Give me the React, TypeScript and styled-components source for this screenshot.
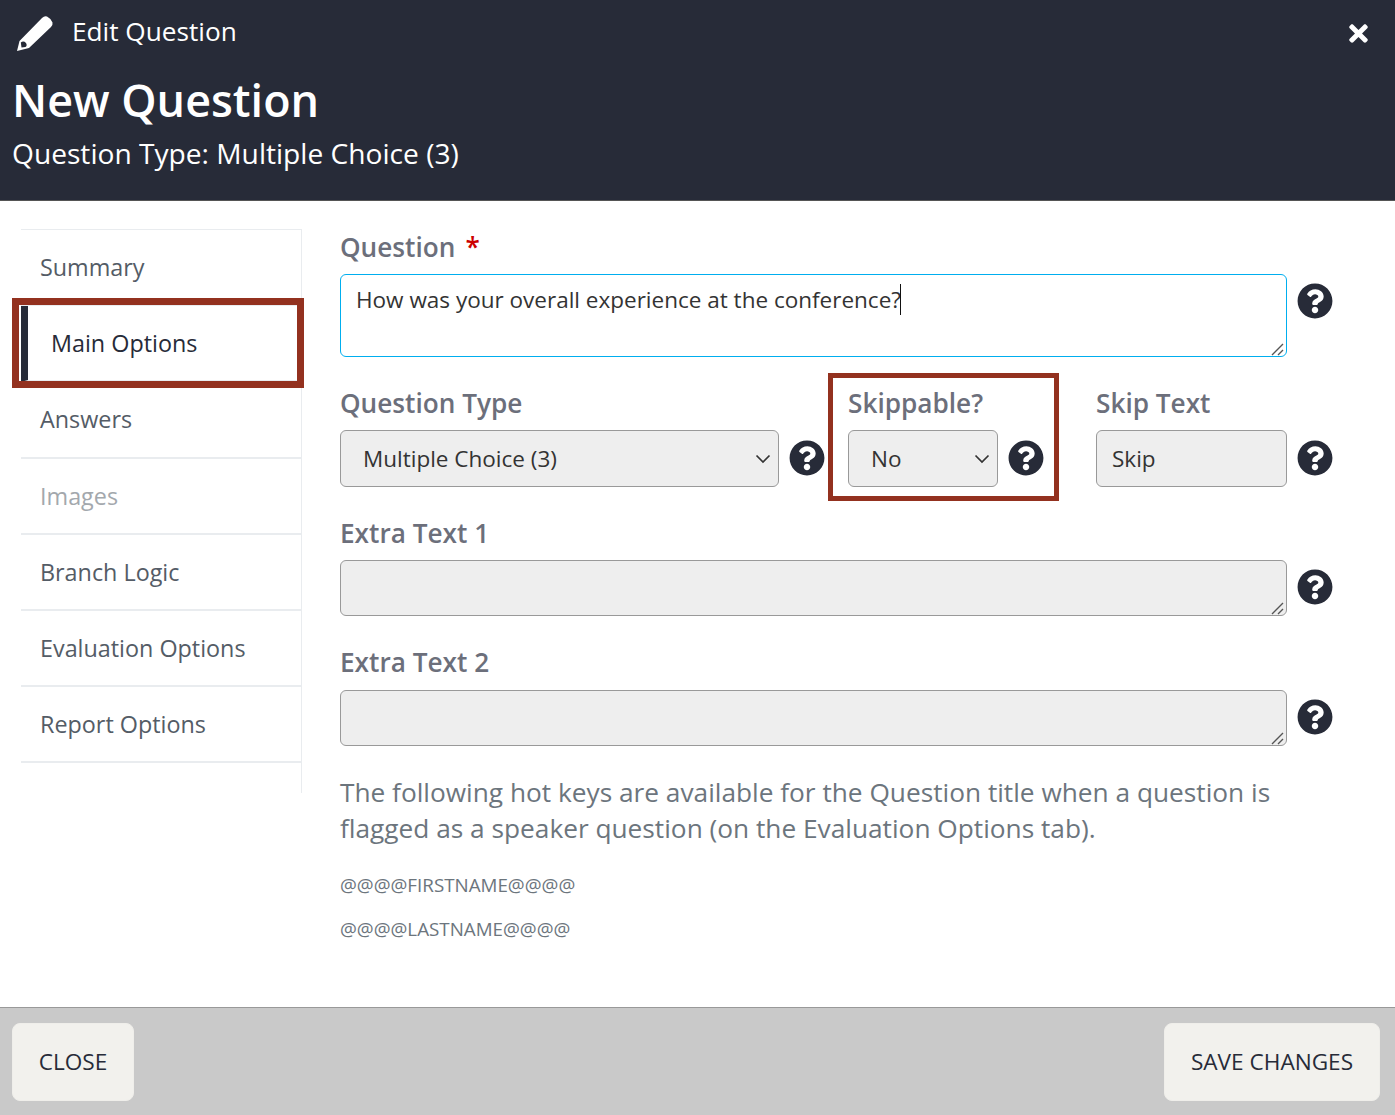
import React from "react";
import styled, { createGlobalStyle } from "styled-components";
import { FaQuestionCircle, FaTimes } from "react-icons/fa";

const GlobalStyle = createGlobalStyle`
    html, body {
        margin: 0;
        padding: 0;
        background: #fff;
    }
    body {
        font-family: "Open Sans", "Noto Sans", sans-serif;
    }
    * {
        box-sizing: border-box;
    }
`;

const Page = styled.div`
    position: relative;
    width: 1395px;
    height: 1115px;
    display: flex;
    flex-direction: column;
    overflow: hidden;
`;

const Header = styled.header`
    height: 201px;
    padding: 15px 14px 0 12px;
    background: #272b38;
    border-bottom: 1px solid #555;
    color: #fff;
`;

const TopRow = styled.div`
    display: flex;
    align-items: center;
    height: 37px;
    padding-left: 4px;
    font-size: 26.2px;
    svg.pencil {
        width: 37px;
        height: 37px;
        margin-right: 19px;
    }
`;

const TopLabel = styled.span`
    margin-bottom: 6px;
`;

const CloseIcon = styled(FaTimes)`
    margin-left: auto;
    margin-right: 9px;
    font-size: 27px;
`;

const Title = styled.h1`
    margin: 18px 0 0 0;
    font-size: 44.9px;
    line-height: 60px;
    font-weight: 600;
`;

const Subtitle = styled.div`
    margin-top: 4px;
    font-size: 28.15px;
    line-height: 38px;
`;

const Body = styled.div`
    flex: 1;
    display: flex;
    padding: 28px 0 0 21px;
`;

const Nav = styled.nav`
    width: 281px;
    height: 564px;
    border-right: 1px solid #e9ecef;
    border-top: 1px solid #e9ecef;
`;

const NavItem = styled.div<{ $active?: boolean; $disabled?: boolean }>`
    display: flex;
    align-items: center;
    height: 76.2px;
    padding-left: ${(p) => (p.$active ? "23px" : "19px")};
    border-bottom: 2px solid #e9ecef;
    border-left: ${(p) => (p.$active ? "7px solid #272b38" : "0")};
    color: ${(p) => (p.$active ? "#272b38" : p.$disabled ? "#a3a8ad" : "#545c66")};
    font-size: 23.35px;
`;

const Form = styled.main`
    width: 1040px;
    margin-left: 38px;
`;

const Label = styled.label`
    display: block;
    height: 36px;
    color: #6c6f7b;
    font-size: 26.2px;
    line-height: 37px;
    font-weight: 600;
    white-space: nowrap;
`;

const Required = styled.span`
    margin-left: 10px;
    color: #c00;
`;

const Line = styled.div<{ $gap?: number }>`
    display: flex;
    align-items: center;
    gap: 10px;
    margin-top: ${(p) => p.$gap ?? 9}px;
`;

const FieldBox = styled.div`
    position: relative;
    display: flex;
    width: 947px;
`;

const TextArea = styled.textarea<{ $focused?: boolean; $h: number }>`
    width: 100%;
    height: ${(p) => p.$h}px;
    padding: 8px 15px;
    border: 1px solid ${(p) => (p.$focused ? "#00aeef" : "#999")};
    border-radius: 6px;
    outline: none;
    background: ${(p) => (p.$focused ? "#fff" : "#eee")};
    color: #333;
    font-family: inherit;
    font-size: 22.5px;
    line-height: 33px;
    resize: none;
`;

const Caret = styled.span`
    position: absolute;
    left: 560px;
    top: 10px;
    width: 1px;
    height: 31px;
    background: #111;
`;

const Grip = styled.svg`
    position: absolute;
    right: 2px;
    bottom: 1px;
    width: 14px;
    height: 14px;
    stroke: #555;
    stroke-width: 1.4;
`;

const HelpIcon = styled(FaQuestionCircle)<{ $raised?: boolean }>`
    flex: none;
    width: 36px;
    height: 36px;
    color: #272b38;
    align-self: ${(p) => (p.$raised ? "flex-start" : "center")};
    margin-top: ${(p) => (p.$raised ? "9px" : "0")};
    margin-bottom: ${(p) => (p.$raised ? "0" : "2px")};
`;

const FieldRow = styled.div`
    display: flex;
    margin-top: 28px;
`;

const FieldGroup = styled.div<{ $width: number; $gap: number }>`
    width: ${(p) => p.$width}px;
    margin-right: ${(p) => p.$gap}px;
`;

const Select = styled.select<{ $w: number }>`
    width: ${(p) => p.$w}px;
    height: 57px;
    padding: 0 30px 0 22px;
    flex: none;
    appearance: none;
    border: 1px solid #999;
    border-radius: 6px;
    outline: none;
    background-color: #eee;
    background-image: url("data:image/svg+xml,%3Csvg xmlns='http://www.w3.org/2000/svg' width='16' height='10' viewBox='0 0 16 10'%3E%3Cpath d='M1.5 1.5 L8 8 L14.5 1.5' fill='none' stroke='%23333' stroke-width='1.7'/%3E%3C/svg%3E");
    background-repeat: no-repeat;
    background-position: right 7px center;
    color: #333;
    font-family: inherit;
    font-size: 22.5px;
`;

const TextInput = styled.input`
    width: 191px;
    height: 57px;
    padding: 0 15px;
    flex: none;
    border: 1px solid #999;
    border-radius: 6px;
    outline: none;
    background: #eee;
    color: #333;
    font-family: inherit;
    font-size: 22.5px;
`;

const ExtraBlock = styled.div`
    margin-top: 28px;
`;

const HotKeyText = styled.p`
    width: 950px;
    margin: 28px 0 0;
    color: #6c757d;
    font-size: 26.25px;
    line-height: 36px;
`;

const HotKey = styled.p<{ $first?: boolean }>`
    margin: ${(p) => (p.$first ? "27px" : "20px")} 0 0;
    color: #6c757d;
    font-size: 18.8px;
    line-height: 24px;
`;

const Footer = styled.footer`
    height: 108px;
    padding: 15px 15px 0 12px;
    display: flex;
    justify-content: space-between;
    background: #c9c9c9;
    border-top: 1px solid #999;
`;

const FooterButton = styled.button<{ $w: number }>`
    width: ${(p) => p.$w}px;
    height: 78px;
    padding: 0 0 2px;
    border: 1px solid #efeeea;
    border-radius: 8px;
    background: #f2f1ed;
    color: #272b38;
    font-family: inherit;
    font-size: 22.6px;
`;

// red annotation frames drawn on top of the screenshot
const Callout = styled.div<{ $x: number; $y: number; $w: number; $h: number; $b: number }>`
    position: absolute;
    left: ${(p) => p.$x}px;
    top: ${(p) => p.$y}px;
    width: ${(p) => p.$w}px;
    height: ${(p) => p.$h}px;
    border: ${(p) => p.$b}px solid #93311f;
    pointer-events: none;
`;

const Pencil = () => (
    <svg className="pencil" viewBox="0 0 37 37" fill="#fff">
        <path
            fillRule="evenodd"
            d="M1 36 L3.5 26 L26 3 Q28.5 0.5 31 1.5 Q35 3.5 36.5 7.5 Q37 10 35 12 L13 33 Z M4.8 27.5 Q7.5 25.5 10 28 Q11.5 30.5 9.5 32 L5.5 32.5 Z"
        />
    </svg>
);

const ResizeGrip = () => (
    <Grip viewBox="0 0 14 14">
        <path d="M1 13 L12 2 M7 13 L12 8" />
    </Grip>
);

const navItems = ["Summary", "Main Options", "Answers", "Images", "Branch Logic", "Evaluation Options", "Report Options"];

const App = () => {
    return (
        <Page>
            <GlobalStyle />
            <Header>
                <TopRow>
                    <Pencil />
                    <TopLabel>Edit Question</TopLabel>
                    <CloseIcon />
                </TopRow>
                <Title>New Question</Title>
                <Subtitle>Question Type: Multiple Choice (3)</Subtitle>
            </Header>
            <Body>
                <Nav>
                    {navItems.map((item) => (
                        <NavItem key={item} $active={item === "Main Options"} $disabled={item === "Images"}>
                            {item}
                        </NavItem>
                    ))}
                </Nav>
                <Form>
                    <Label>
                        Question<Required>*</Required>
                    </Label>
                    <Line>
                        <FieldBox>
                            <TextArea $focused $h={83} readOnly value="How was your overall experience at the conference?" />
                            <Caret />
                            <ResizeGrip />
                        </FieldBox>
                        <HelpIcon $raised />
                    </Line>
                    <FieldRow>
                        <FieldGroup $width={485} $gap={23}>
                            <Label>Question Type</Label>
                            <Line>
                                <Select $w={439} defaultValue="3">
                                    <option value="3">Multiple Choice (3)</option>
                                </Select>
                                <HelpIcon />
                            </Line>
                        </FieldGroup>
                        <FieldGroup $width={196} $gap={52}>
                            <Label>Skippable?</Label>
                            <Line>
                                <Select $w={150} defaultValue="no">
                                    <option value="no">No</option>
                                </Select>
                                <HelpIcon />
                            </Line>
                        </FieldGroup>
                        <FieldGroup $width={237} $gap={0}>
                            <Label>Skip Text</Label>
                            <Line>
                                <TextInput readOnly value="Skip" />
                                <HelpIcon />
                            </Line>
                        </FieldGroup>
                    </FieldRow>
                    <ExtraBlock>
                        <Label>Extra Text 1</Label>
                        <Line>
                            <FieldBox>
                                <TextArea $h={56} readOnly />
                                <ResizeGrip />
                            </FieldBox>
                            <HelpIcon />
                        </Line>
                    </ExtraBlock>
                    <ExtraBlock>
                        <Label>Extra Text 2</Label>
                        <Line $gap={10}>
                            <FieldBox>
                                <TextArea $h={56} readOnly />
                                <ResizeGrip />
                            </FieldBox>
                            <HelpIcon />
                        </Line>
                    </ExtraBlock>
                    <HotKeyText>
                        The following hot keys are available for the Question title when a question is flagged as a speaker
                        question (on the Evaluation Options tab).
                    </HotKeyText>
                    <HotKey $first>@@@@FIRSTNAME@@@@</HotKey>
                    <HotKey>@@@@LASTNAME@@@@</HotKey>
                </Form>
            </Body>
            <Footer>
                <FooterButton $w={122}>CLOSE</FooterButton>
                <FooterButton $w={216}>SAVE CHANGES</FooterButton>
            </Footer>
            <Callout $x={12} $y={298} $w={292} $h={90} $b={7} />
            <Callout $x={828} $y={373} $w={231} $h={128} $b={5} />
        </Page>
    );
};

export default App;
